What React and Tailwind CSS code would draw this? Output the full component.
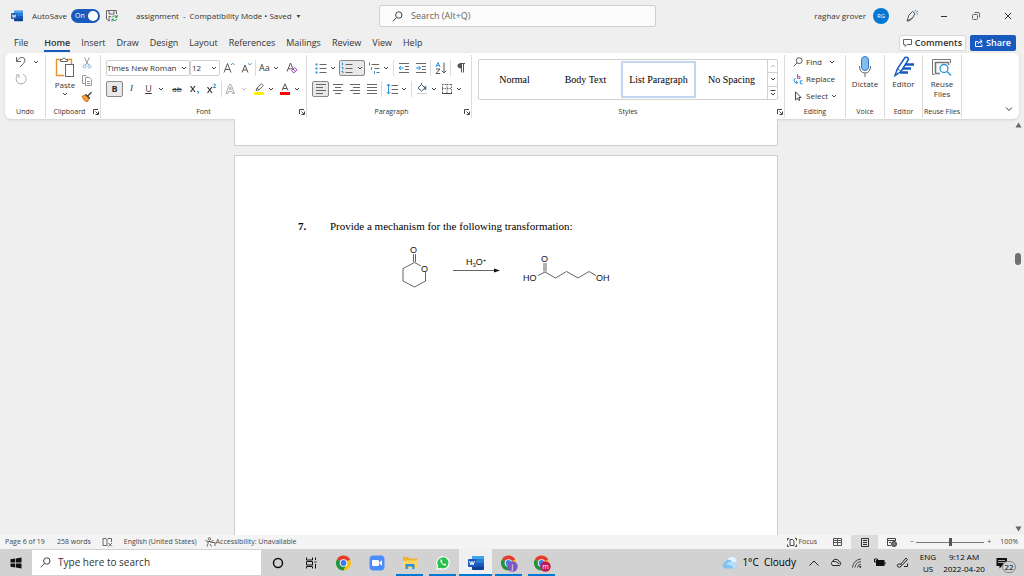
import React from "react";

const TABS = ["File", "Home", "Insert", "Draw", "Design", "Layout", "References", "Mailings", "Review", "View", "Help"];

const STYLES = ["Normal", "Body Text", "List Paragraph", "No Spacing"];

function Svg({ w = 16, h = 16, children, className = "" }) {
  return (
    <svg width={w} height={h} viewBox={`0 0 ${w} ${h}`} fill="none" stroke="#666" className={"shrink-0 " + className} aria-hidden="true">
      {children}
    </svg>
  );
}

function Chevron({ color = "#444" }) {
  return (
    <Svg w={6} h={6}>
      <path d="M1 2 L3 4 L5 2" stroke={color} />
    </Svg>
  );
}

function Tool({ label, active, wide, narrow, children }) {
  return (
    <button
      aria-label={label}
      className={
        "flex h-4 shrink-0 items-center justify-center rounded-xs " +
        (wide ? "w-[26px] gap-1 " : narrow ? "w-2 " : "w-[17px] ") +
        (active ? "border border-[#888] bg-[#e8e8e8]" : "")
      }>
      {children}
    </button>
  );
}

function Drop({ label, color }) {
  return (
    <Tool label={label} narrow>
      <Chevron color={color} />
    </Tool>
  );
}

function Divider() {
  return <span className="mx-px h-4 w-px shrink-0 bg-[#dcdcdc]" />;
}

function Launcher({ label }) {
  return (
    <button aria-label={label} className="absolute right-px bottom-0 flex h-3 items-center">
      <Svg w={6} h={6}>
        <path d="M0.5 5 V0.5 H5 M2.5 2.5 L5 5 M5.5 2.5 V5.5 H2.5" stroke="#444" />
      </Svg>
    </button>
  );
}

function Group({ label, launcher, className = "", children }) {
  return (
    <section className={"relative flex flex-col border-r border-[#dcdcdc] " + className}>
      <div className="flex-1">{children}</div>
      <h2 className="h-3 text-center text-[7px] leading-3 whitespace-nowrap">{label}</h2>
      {launcher && <Launcher label={label + " settings"} />}
    </section>
  );
}

function WordLogo({ size = 12 }) {
  return (
    <svg width={size} height={size} viewBox="0 0 16 16" className="shrink-0" aria-hidden="true">
      <rect x="4" y="1" width="12" height="14" rx="1" fill="#103f91" />
      <path d="M4 2a1 1 0 0 1 1-1h10a1 1 0 0 1 1 1v2.5H4z" fill="#41a5ee" />
      <path d="M4 4.5h12V8H4z" fill="#2b7cd3" />
      <path d="M4 8h12v3.5H4z" fill="#185abd" />
      <rect x="0" y="4" width="8" height="8" rx="1" fill="#185abd" />
      <path d="M1.6 6 L2.8 10 L4 6.5 L5.2 10 L6.4 6" fill="none" stroke="#fff" strokeWidth="1" />
    </svg>
  );
}

function ChromeLogo({ badge, color }) {
  return (
    <svg width="18" height="18" viewBox="0 0 18 18" aria-hidden="true">
      <circle cx="8.5" cy="9" r="7.5" fill="#fbc116" />
      <path d="M8.5 9 L2 5.2 A7.5 7.5 0 0 1 15 5.2 Z" fill="#e33b2e" />
      <path d="M8.5 9 L2 5.2 A7.5 7.5 0 0 0 8.5 16.5 L11 11 Z" fill="#229342" />
      <path d="M8.5 5.6h6.6" stroke="#e33b2e" strokeWidth="1" />
      <circle cx="8.5" cy="9" r="3.8" fill="#fff" />
      <circle cx="8.5" cy="9" r="2.9" fill="#3b7ded" />
      {badge && <circle cx="12.5" cy="12.5" r="5.2" fill={color} />}
      {badge && (
        <text x="12.5" y="14.5" textAnchor="middle" fontSize="7" fill="#fff">
          {badge}
        </text>
      )}
    </svg>
  );
}

function SearchIcon({ size = 11 }) {
  return (
    <svg width={size} height={size} viewBox="0 0 11 11" fill="none" stroke="#444" className="shrink-0" aria-hidden="true">
      <circle cx="6.8" cy="4" r="3.2" />
      <path d="M4.5 6.5 L0.8 10.3" />
    </svg>
  );
}

function PenIcon() {
  return (
    <Svg w={12} h={12}>
      <path d="M1 11 L3 5 L6.5 1.5 L9 3.5 L6.5 8 Z M1 11 L4 10.5 L6.5 8" stroke="#555" />
      <path d="M9 1.5 L9.5 0 M10.3 2.3 L12 1 M10.5 4 H12" stroke="#2b93d8" />
    </Svg>
  );
}

function TitleBar() {
  return (
    <header className="flex h-8 items-center pl-[11px] text-[8px]">
      <div className="flex flex-1 items-center whitespace-nowrap">
        <WordLogo />
        <label className="ml-[9px] flex items-center gap-1">
          AutoSave
          <input type="checkbox" defaultChecked className="sr-only" />
          <span className="flex h-[14px] w-[29px] items-center justify-between rounded-full bg-[#185abd] pr-[2px] pl-1 text-[7px] text-white">
            On
            <span className="h-[10px] w-[10px] rounded-full bg-white" />
          </span>
        </label>
        <button aria-label="Save" className="ml-[6px]">
          <Svg w={12} h={12}>
            <path d="M0.5 0.5 H10.5 V4 M0.5 0.5 V9 L2 10.5 H4 M3 0.5 V4 H8 V0.5 M3 10 V6.5 H5" stroke="#666" />
            <path d="M6 7.5 A3 3 0 0 1 11 7 M11.2 4.8 V7.3 H9 M11 9 A3 3 0 0 1 6.2 9.5 M6 11.5 V9.2 H8" stroke="#2d9a50" />
          </Svg>
        </button>
        <h1 className="ml-[18px] flex items-center gap-1">
          <span>assignment</span>
          <span>-</span>
          <span>Compatibility Mode • Saved</span>
          <Svg w={5} h={5}>
            <path d="M0.5 1 H4.5 L2.5 4 Z" fill="#444" stroke="none" />
          </Svg>
        </h1>
      </div>
      <label className="flex h-[22px] w-[277px] items-center gap-2 rounded-xs border border-[#d0d0d0] bg-[#fbfbfb] pl-3">
        <SearchIcon />
        <input type="text" aria-label="Search" placeholder="Search (Alt+Q)" className="w-full bg-transparent text-[9px] outline-none placeholder:text-[#666]" />
      </label>
      <div className="flex flex-1 items-center justify-end">
        <span>raghav grover</span>
        <span className="ml-[7px] flex h-4 w-4 items-center justify-center rounded-full bg-[#0078d4] text-[6px] text-white">RG</span>
        <button aria-label="Draw" className="ml-[7px] flex w-8 justify-center">
          <PenIcon />
        </button>
        <button aria-label="Minimize" className="flex w-8 justify-center">
          <Svg w={8} h={8}>
            <path d="M1 4.5 H7" stroke="#333" />
          </Svg>
        </button>
        <button aria-label="Restore" className="flex w-8 justify-center">
          <Svg w={8} h={8}>
            <rect x="0.5" y="2.5" width="5" height="5" rx="1" />
            <path d="M2.5 0.5 H6 Q7.5 0.5 7.5 2 V5.5" />
          </Svg>
        </button>
        <button aria-label="Close" className="flex w-8 justify-center">
          <Svg w={8} h={8}>
            <path d="M1 1 L7 7 M7 1 L1 7" stroke="#333" />
          </Svg>
        </button>
      </div>
    </header>
  );
}

function TabRow() {
  return (
    <div className="flex h-[21px] items-center pr-2 pl-[14px]">
      <nav className="flex flex-1 items-center gap-[11px] pt-px text-[9px]">
        {TABS.map((t) => (
          <button
            key={t}
            className={
              "h-[18px] border-b-2 pt-px " +
              (t === "Home" ? "border-[#185abd] font-semibold" : "border-transparent") +
              (t === "File" ? " mr-[5px]" : "")
            }>
            {t}
          </button>
        ))}
      </nav>
      <div className="flex gap-1 text-[9px] font-semibold">
        <button className="flex h-4 items-center gap-[3px] rounded-xs border border-[#d8d8d8] bg-white px-[3px]">
          <Svg w={9} h={8}>
            <path d="M0.5 0.5 H8.5 V5.5 H4 L2 7.5 V5.5 H0.5 Z" />
          </Svg>
          Comments
        </button>
        <button className="flex h-4 items-center gap-[3px] rounded-xs bg-[#185abd] px-[5px] text-white">
          <Svg w={8} h={8}>
            <path d="M3 2.5 H0.5 V7.5 H7 V5.5 M2.5 5 Q3 2.5 7 2.5 M5 0.5 L7.2 2.5 L5 4.5" stroke="#fff" />
          </Svg>
          Share
        </button>
      </div>
    </div>
  );
}

function UndoGroup() {
  return (
    <Group label="Undo" className="w-[41px]">
      <div className="flex items-center gap-[6px] pt-px pl-[10px]">
        <button aria-label="Undo">
          <Svg w={12} h={12}>
            <path d="M1.5 1 V5.5 H6 M1.5 5.5 L4 2.5 Q7 0 9.5 2.5 Q11 5 8.5 7.5 L5 11" />
          </Svg>
        </button>
        <Chevron />
      </div>
      <button aria-label="Redo" className="block pt-[5px] pl-[10px]">
        <Svg w={12} h={12}>
          <path d="M8 1.3 A5 5 0 1 1 2.5 2.5 M1 2 H4 V5" stroke="#aaa" />
        </Svg>
      </button>
    </Group>
  );
}

function ClipboardGroup() {
  return (
    <Group label="Clipboard" launcher className="w-[55px] pr-[7px]">
      <div className="flex justify-between pl-2">
        <button className="flex flex-col items-center text-[8px] leading-3">
          <Svg w={22} h={24}>
            <path d="M7 4.5 H2.5 V20.5 H10 M13 4.5 H17.5 V9" stroke="#e8912d" strokeWidth="1.4" />
            <path d="M6.5 6.5 V4.5 H8.5 Q10 1 11.5 4.5 H13.5 V6.5 Z" stroke="#666" />
            <rect x="11.5" y="9.5" width="8" height="12" fill="#fff" />
          </Svg>
          Paste
          <Chevron />
        </button>
        <div className="flex flex-col items-center gap-[5px] pt-[2px]">
          <button aria-label="Cut">
            <Svg w={10} h={12}>
              <path d="M2.5 0.5 L6.5 8 M7.5 0.5 L3.5 8" stroke="#999" />
              <circle cx="2.5" cy="9.5" r="1.5" stroke="#7fb6dd" />
              <circle cx="7.5" cy="9.5" r="1.5" stroke="#7fb6dd" />
            </Svg>
          </button>
          <button aria-label="Copy">
            <Svg w={12} h={12}>
              <path d="M4 9.5 H1.5 V1.5 H5 L6 2.5" stroke="#999" />
              <path d="M4.5 3.5 H8.5 L10.5 5.5 V11.5 H4.5 Z M6 7.5 H9 M6 9.5 H9" stroke="#999" />
            </Svg>
          </button>
          <button aria-label="Format painter">
            <Svg w={12} h={12}>
              <path d="M1 5.5 L5 3.5 L8.5 7 L6 11 Q2.5 9.5 1 5.5 Z" fill="#f2a03d" stroke="#c97415" />
              <path d="M4.5 3.5 L8.8 7.5 M6.7 5 L10.5 1.3" stroke="#444" strokeWidth="1.4" />
            </Svg>
          </button>
        </div>
      </div>
    </Group>
  );
}

function FontGroup() {
  return (
    <Group label="Font" launcher className="w-[206px] px-[5px]">
      <div className="flex flex-col gap-[5px] pt-[5px]">
        <div className="flex h-4 items-center text-[8px]">
          <label className="flex h-4 w-[84px] items-center rounded-xs border border-[#d0d0d0] pr-[2px]">
            <select aria-label="Font" className="w-full appearance-none bg-transparent outline-none">
              <option>Times New Roman</option>
            </select>
            <Chevron />
          </label>
          <label className="flex h-4 w-[30px] items-center rounded-xs border border-[#d0d0d0] pr-[2px] pl-px">
            <select aria-label="Font size" className="w-full appearance-none bg-transparent outline-none">
              <option>12</option>
            </select>
            <Chevron />
          </label>
          <Tool label="Grow font">
            <Svg w={12} h={12}>
              <path d="M1 10.5 L4.5 1.5 L8 10.5 M2.2 7.5 H6.8" stroke="#555" />
              <path d="M8 3 L9.7 1.2 L11.4 3" stroke="#2b93d8" />
            </Svg>
          </Tool>
          <Tool label="Shrink font">
            <Svg w={12} h={12}>
              <path d="M2 10.5 L5 3 L8 10.5 M3.2 8 H6.8" stroke="#555" />
              <path d="M8 1.2 L9.7 3 L11.4 1.2" stroke="#2b93d8" />
            </Svg>
          </Tool>
          <Divider />
          <button className="ml-[2px] flex items-center gap-[3px] text-[9px]">
            Aa <Chevron />
          </button>
          <span className="flex-1" />
          <Tool label="Clear formatting">
            <Svg w={13} h={12}>
              <path d="M1 9.5 L4.5 1 L7.5 8 M2.2 6.8 H6" stroke="#555" />
              <path d="M5.5 8.7 L8.7 5.5 L11 7.8 L7.8 11 Z M7 7 L9.5 9.5" stroke="#a33fb5" />
            </Svg>
          </Tool>
        </div>
        <div className="flex h-4 items-center text-[9px]">
          <Tool label="Bold" active>
            <b className="text-[#333]">B</b>
          </Tool>
          <Tool label="Italic">
            <i className="font-['Liberation_Serif',serif]">I</i>
          </Tool>
          <Tool label="Underline">
            <span className="underline">U</span>
          </Tool>
          <Drop label="Underline style" />
          <span className="w-1" />
          <Tool label="Strikethrough">
            <span className="text-[8px] line-through">ab</span>
          </Tool>
          <Tool label="Subscript">
            <Svg w={11} h={12}>
              <path d="M1.5 3 L6 9 M6 3 L1.5 9" stroke="#333" strokeWidth="1.2" />
              <path d="M8 8.5 H9.5 V10 L8.5 11" stroke="#2b93d8" />
            </Svg>
          </Tool>
          <Tool label="Superscript">
            <Svg w={11} h={12}>
              <path d="M1.5 4 L6 10 M6 4 L1.5 10" stroke="#333" strokeWidth="1.2" />
              <path d="M7.5 1.5 Q9.5 0 9.5 2 L7.5 4.5 H10" stroke="#2b93d8" />
            </Svg>
          </Tool>
          <Divider />
          <Tool label="Text effects">
            <Svg w={12} h={12}>
              <path d="M1 10.5 L4.5 1.5 H6 L9.5 10.5 H7.5 L6.8 8.5 H3.8 L3 10.5 Z M4.5 6.5 H6.2 L5.3 4 Z" stroke="#aaa" />
            </Svg>
          </Tool>
          <Drop label="Text effects menu" color="#bbb" />
          <span className="w-[3px]" />
          <Tool label="Highlight">
            <Svg w={12} h={12}>
              <path d="M3 7.5 L4 5 L8.5 0.8 L10.3 2.6 L6 6.8 L3 7.5 Z M4 5 L6 6.8" stroke="#666" />
              <rect x="1" y="9" width="10" height="3" fill="#fff200" stroke="none" />
            </Svg>
          </Tool>
          <Drop label="Highlight colour" />
          <span className="w-px" />
          <Tool label="Font colour">
            <Svg w={12} h={12}>
              <path d="M3 7.5 L6 0.8 L9 7.5 M4 5.5 H8" stroke="#555" />
              <rect x="1" y="9" width="10" height="3" fill="#f00" stroke="none" />
            </Svg>
          </Tool>
          <Drop label="Font colour menu" />
        </div>
      </div>
    </Group>
  );
}

function AlignIcon({ lines }) {
  return (
    <Svg w={12} h={12}>
      {lines.map(([a, b], i) => (
        <path key={i} d={`M${a} ${1.5 + i * 3} H${b}`} />
      ))}
    </Svg>
  );
}

function ListIcon({ numbered }) {
  return (
    <Svg w={12} h={12}>
      <path d="M4.5 2.5 H11.5 M4.5 6.5 H11.5 M4.5 10.5 H11.5" />
      {numbered ? (
        <path d="M1.5 0.5 V3.5 M0.5 5.5 H2 V7.5 M0.5 9.5 H2 V11.5" stroke="#2b93d8" />
      ) : (
        <path d="M0.5 2.5 H2.5 M0.5 6.5 H2.5 M0.5 10.5 H2.5" stroke="#2b93d8" strokeWidth="2" />
      )}
    </Svg>
  );
}

function IndentIcon({ out }) {
  return (
    <Svg w={12} h={12}>
      <path d="M1 1.5 H11 M7 4.5 H11 M7 7.5 H11 M1 10.5 H11" />
      <path d={out ? "M5.5 6 H1 M3 4 L1 6 L3 8" : "M1 6 H5.5 M3.5 4 L5.5 6 L3.5 8"} stroke="#2b93d8" />
    </Svg>
  );
}

function ParagraphGroup() {
  return (
    <Group label="Paragraph" launcher className="w-[165px] pl-[5px]">
      <div className="flex flex-col gap-[5px] pt-[5px]">
        <div className="flex h-4 items-center">
          <Tool label="Bullets">
            <ListIcon />
          </Tool>
          <Drop label="Bullet library" />
          <span className="w-[2px]" />
          <Tool label="Numbering" active wide>
            <ListIcon numbered />
            <Chevron />
          </Tool>
          <Tool label="Multilevel list">
            <Svg w={12} h={12}>
              <path d="M3.5 2.5 H11 M6.5 6.5 H11.5 M8.5 10.5 H11.5" />
              <path d="M1.5 0.5 V3.5 M3.5 5 V8 M6.5 9 V12" stroke="#2b93d8" />
            </Svg>
          </Tool>
          <Drop label="Multilevel list menu" />
          <span className="w-[2px]" />
          <Divider />
          <Tool label="Decrease indent">
            <IndentIcon out />
          </Tool>
          <Tool label="Increase indent">
            <IndentIcon />
          </Tool>
          <Divider />
          <Tool label="Sort">
            <Svg w={12} h={12}>
              <path d="M0.8 5 L3 0.5 L5.2 5 M1.5 3.5 H4.5" stroke="#2b93d8" />
              <path d="M1 7 H5 L1 11.5 H5.2 M9 0.5 V11 M6.8 8.8 L9 11 L11.2 8.8" stroke="#555" />
            </Svg>
          </Tool>
          <Divider />
          <Tool label="Show marks">
            <Svg w={10} h={12}>
              <path d="M5.5 10.5 V1.5 M7.5 10.5 V1.5 M4 1.5 H9" stroke="#555" />
              <path d="M5.5 1 V6.5 Q1.5 6.5 1.5 3.8 Q1.5 1 5.5 1Z" fill="#555" stroke="none" />
            </Svg>
          </Tool>
        </div>
        <div className="flex h-4 items-center">
          <Tool label="Align left" active>
            <AlignIcon lines={[[1, 11], [1, 8], [1, 11], [1, 8]]} />
          </Tool>
          <Tool label="Center">
            <AlignIcon lines={[[1, 11], [3, 9], [1, 11], [3, 9]]} />
          </Tool>
          <Tool label="Align right">
            <AlignIcon lines={[[1, 11], [4, 11], [1, 11], [4, 11]]} />
          </Tool>
          <Tool label="Justify">
            <AlignIcon lines={[[1, 11], [1, 11], [1, 11], [1, 11]]} />
          </Tool>
          <Divider />
          <Tool label="Line spacing">
            <Svg w={12} h={12}>
              <path d="M5.5 2.5 H12 M5.5 6.5 H12 M5.5 10.5 H12" />
              <path d="M2.5 1 V11 M0.8 3 L2.5 1 L4.2 3 M0.8 9 L2.5 11 L4.2 9" stroke="#2b93d8" />
            </Svg>
          </Tool>
          <Drop label="Line spacing menu" />
          <span className="w-[2px]" />
          <Divider />
          <Tool label="Shading">
            <Svg w={12} h={12}>
              <path d="M2 5 L5.5 1.5 L9 5 L5.5 8 Z M5.5 1.5 V0" stroke="#555" />
              <path d="M9.5 3 V7" stroke="#2b7cd3" strokeWidth="1.6" />
              <path d="M1 10.5 H11" stroke="#ccc" />
            </Svg>
          </Tool>
          <Drop label="Shading colour" />
          <Tool label="Borders">
            <Svg w={12} h={12}>
              <path d="M1.5 1 V10 M10.5 1 V10 M6 1 V10 M1 1.5 H11 M1 5.5 H11" stroke="#666" strokeDasharray="1.5 1" />
              <path d="M1 10.5 H11" stroke="#444" />
            </Svg>
          </Tool>
          <Drop label="Borders menu" />
        </div>
      </div>
    </Group>
  );
}

function StylesGroup() {
  return (
    <Group label="Styles" launcher className="flex-1 px-[6px]">
      <div className="mt-1 flex h-[41px] rounded-xs border border-[#d0d0d0]">
        {STYLES.map((s) => (
          <button
            key={s}
            className={
              "my-px flex-1 font-['Liberation_Serif',serif] text-[10px] whitespace-nowrap text-black " +
              (s === "List Paragraph" ? "border-2 border-[#c3d5f1]" : "")
            }>
            {s}
          </button>
        ))}
        <div className="flex w-[10px] flex-col divide-y divide-[#d0d0d0] border-l border-[#d0d0d0]">
          <button aria-label="Scroll up" className="flex flex-1 items-center justify-center">
            <Svg w={6} h={6}>
              <path d="M1 4 L3 2 L5 4" stroke="#bbb" />
            </Svg>
          </button>
          <button aria-label="Scroll down" className="flex flex-1 items-center justify-center">
            <Chevron />
          </button>
          <button aria-label="More styles" className="flex flex-1 items-center justify-center">
            <Svg w={6} h={6}>
              <path d="M0.5 0.5 H5.5 M1 3 L3 5 L5 3" stroke="#444" />
            </Svg>
          </button>
        </div>
      </div>
    </Group>
  );
}

function EditingGroup() {
  return (
    <Group label="Editing" className="w-[61px]">
      <div className="flex flex-col gap-[3px] pl-2 text-[8px] leading-[14px]">
        <button className="flex items-center gap-[3px]">
          <SearchIcon size={10} />
          <span className="mr-1">Find</span>
          <Chevron />
        </button>
        <button className="flex items-center gap-[3px]">
          <Svg w={10} h={11}>
            <path d="M4.5 0 V4.5 H7 V2.5 H4.5" stroke="#b04fc0" />
            <path d="M2.5 4 Q-0.5 6 2 8.5 H4.5 M3 6.8 L4.8 8.5 L3 10.3 M9.5 6.8 H7.3 V9.8 H9.5" stroke="#2b93d8" />
          </Svg>
          Replace
        </button>
        <button className="flex items-center gap-[3px]">
          <Svg w={10} h={10}>
            <path d="M2.5 0.8 V9 L4.5 7.2 L5.8 9.6 L6.8 9 L5.8 6.5 H8 Z" stroke="#444" />
          </Svg>
          Select
          <Chevron />
        </button>
      </div>
    </Group>
  );
}

function BigButton({ icon, children }) {
  return (
    <button className="flex w-full flex-col items-center pt-px text-[8px] leading-[10px]">
      {icon}
      <span className="pt-[2px]">{children}</span>
    </button>
  );
}

function Ribbon() {
  return (
    <div className="mx-[5px] flex h-[66px] rounded-md bg-white pt-[2px] pb-px shadow">
      <UndoGroup />
      <ClipboardGroup />
      <FontGroup />
      <ParagraphGroup />
      <StylesGroup />
      <EditingGroup />
      <Group label="Voice" className="w-[39px]">
        <BigButton
          icon={
            <Svg w={20} h={21}>
              <rect x="6.5" y="0.5" width="7" height="14" rx="3.5" fill="#83bbec" stroke="#2b7cd3" />
              <path d="M4.5 10 Q4.5 17 10 17 Q15.5 17 15.5 10 M10 17 V21" />
            </Svg>
          }>
          Dictate
        </BigButton>
      </Group>
      <Group label="Editor" className="w-[38px]">
        <BigButton
          icon={
            <Svg w={22} h={21}>
              <path d="M11 8.5 H21 M10 12.5 H18 M7 16.5 H15" stroke="#185abd" strokeWidth="2.4" />
              <path d="M2 19.5 L4.5 12.5 L12 1.5 Q15 0.5 15.5 3.5 L8 15.5 Z" fill="#fff" stroke="#185abd" strokeWidth="1.5" />
              <path d="M4.5 12.5 L8 15.5" stroke="#185abd" />
            </Svg>
          }>
          Editor
        </BigButton>
      </Group>
      <Group label="Reuse Files" className="w-[39px]">
        <BigButton
          icon={
            <Svg w={22} h={21}>
              <path d="M3.5 18.5 H1.5 V3.5 H19.5 V7" stroke="#777" />
              <path d="M9 17.5 H4.5 V6.5 H17.5 V9" stroke="#777" strokeWidth="1.6" />
              <circle cx="13" cy="12.5" r="4" fill="#fff" stroke="#2b93d8" strokeWidth="1.3" />
              <path d="M16 15.5 L20 19.5" stroke="#2b93d8" strokeWidth="1.3" />
            </Svg>
          }>
          Reuse Files
        </BigButton>
      </Group>
      <div className="flex w-[57px] items-end justify-end p-[6px]">
        <button aria-label="Collapse ribbon">
          <Svg w={8} h={6}>
            <path d="M1 1.5 L4 4.5 L7 1.5" stroke="#333" />
          </Svg>
        </button>
      </div>
    </div>
  );
}

function Reaction() {
  return (
    <svg width="216" height="52" viewBox="0 0 216 52" fill="none" stroke="#222" strokeWidth="0.7" className="font-['Liberation_Sans',sans-serif]" role="img" aria-label="Lactone hydrolysis">
      {/* lactone ring */}
      <path d="M17.5 20.5 L6 26.5 V39 L17.5 45 L28.5 39 V30 M17.5 20.5 L24 24" />
      <path d="M16.5 12 V20 M18.5 12 V20" />
      {/* reaction arrow */}
      <path d="M56 28.5 H99" />
      <path d="M97 26.5 L103 28.5 L97 30.5 Z" fill="#111" stroke="none" />
      {/* hydroxy acid */}
      <path d="M141 33.5 L148 30 L158.5 36 L169.5 29.5 L181 36 L192 29.5 L199 33.5" />
      <path d="M147 21 V29.5 M149 21 V29.5" />
      <g fill="#111" stroke="none" fontSize="9">
        <text x="13" y="11">O</text>
        <text x="24" y="30">O</text>
        <text x="69" y="23">
          H<tspan fontSize="6" dy="2">3</tspan>
          <tspan dy="-2">O</tspan>
          <tspan fontSize="6" dy="-3">+</tspan>
        </text>
        <text x="144" y="20">O</text>
        <text x="126" y="39">HO</text>
        <text x="199" y="39">OH</text>
      </g>
    </svg>
  );
}

function DocumentArea() {
  return (
    <main className="flex min-h-0 flex-1">
      <div className="flex flex-1 flex-col items-center gap-[9px] overflow-hidden">
        <div className="h-[27px] w-[544px] shrink-0 border border-t-0 border-[#cfcfcf] bg-white" />
        <article className="w-[544px] flex-1 border border-b-0 border-[#cfcfcf] bg-white px-[63px] pt-[63px] font-['Liberation_Serif',serif] text-[11px] text-black">
          <p className="flex leading-[14px]">
            <b className="w-8">7.</b>
            Provide a mechanism for the following transformation:
          </p>
          <div className="mt-[9px] pl-[99px]">
            <Reaction />
          </div>
        </article>
      </div>
      <div className="flex w-3 flex-col items-center justify-between py-[3px]">
        <Svg w={7} h={6}>
          <path d="M0.5 5.5 H6.5 L3.5 0.5 Z" fill="#666" stroke="none" />
        </Svg>
        <div className="flex flex-1 flex-col pt-[125px]">
          <span className="h-3 w-[6px] rounded-full bg-[#707070]" />
        </div>
        <Svg w={7} h={6}>
          <path d="M0.5 0.5 H6.5 L3.5 5.5 Z" fill="#666" stroke="none" />
        </Svg>
      </div>
    </main>
  );
}

function StatusBar() {
  return (
    <footer className="flex h-[14px] items-center bg-[#f4f4f4] pr-[6px] pl-[5px] text-[7px] whitespace-nowrap text-[#444]">
      <span>Page 6 of 19</span>
      <span className="ml-3">258 words</span>
      <Svg w={11} h={9} className="ml-[11px]">
        <path d="M4.5 7.5 H1 V0.5 H4 L5 1.5 L6 0.5 H9.5 V4 M5 1.5 V8 M6.5 5 L10 8.5 M10 5 L6.5 8.5" />
      </Svg>
      <span className="ml-[11px]">English (United States)</span>
      <Svg w={11} h={10} className="ml-2">
        <circle cx="4.5" cy="1.8" r="1.2" />
        <path d="M0.5 3.5 L3 4.5 V6.5 L2 9.5 M8.5 3.5 L6 4.5 V6 M3 4.5 H6 M5 7 L6.5 9.5 M7 5.5 H10 V9" />
      </Svg>
      <span>Accessibility: Unavailable</span>
      <span className="flex-1" />
      <button className="flex items-center gap-px">
        <Svg w={10} h={9}>
          <path d="M2 0.5 H0.5 V2.5 M8 0.5 H9.5 V2.5 M0.5 6.5 V8.5 H2 M9.5 6.5 V8.5 H8 M3 1.5 H5.5 L7 3 V7.5 H3 Z" stroke="#444" />
        </Svg>
        Focus
      </button>
      <button aria-label="Read mode" className="ml-[7px] flex w-[27px] justify-center">
        <Svg w={9} h={8}>
          <path d="M0.5 0.5 H8.5 V7.5 H0.5 Z M4.5 0.5 V7.5 M1 2.5 H4 M1 4.5 H4 M5 2.5 H8 M5 4.5 H8" stroke="#555" />
        </Svg>
      </button>
      <button aria-label="Print layout" className="flex h-[14px] w-[27px] items-center justify-center bg-[#dcdcdc]">
        <Svg w={8} h={9}>
          <path d="M0.5 0.5 H7.5 V8.5 H0.5 Z M2 2.5 H6 M2 4.5 H6 M2 6.5 H6" stroke="#333" />
        </Svg>
      </button>
      <button aria-label="Web layout" className="flex w-[27px] justify-center">
        <Svg w={10} h={9}>
          <path d="M4 7.5 H0.5 V0.5 H8.5 V3 M0.5 2.5 H8 M2 4.5 H4" stroke="#444" />
          <circle cx="7" cy="6" r="2.5" fill="#777" stroke="#444" />
        </Svg>
      </button>
      <button aria-label="Zoom out" className="ml-[3px] w-2 text-center">−</button>
      <input
        type="range"
        aria-label="Zoom"
        defaultValue="50"
        className="h-2 w-[68px] appearance-none bg-transparent [&::-webkit-slider-runnable-track]:h-px [&::-webkit-slider-runnable-track]:bg-[#777] [&::-webkit-slider-thumb]:-mt-1 [&::-webkit-slider-thumb]:h-2 [&::-webkit-slider-thumb]:w-[3px] [&::-webkit-slider-thumb]:appearance-none [&::-webkit-slider-thumb]:bg-[#555]"
      />
      <button aria-label="Zoom in" className="ml-px w-2 text-center">+</button>
      <span className="ml-[7px]">100%</span>
    </footer>
  );
}

function TaskButton({ label, open, active, children }) {
  return (
    <button
      aria-label={label}
      className={"flex w-[33px] items-stretch justify-center " + (active ? "bg-[#f0f0f0]" : "px-[3px]")}>
      <span className={"flex flex-1 items-center justify-center border-b-2 pt-[2px] " + (open ? "border-[#0078d4]" : "border-transparent")}>
        {children}
      </span>
    </button>
  );
}

function Taskbar() {
  return (
    <div className="flex h-[27px] items-stretch bg-[#d2d2d2] text-black">
      <button aria-label="Start" className="flex w-8 items-center justify-center">
        <Svg w={12} h={12}>
          <path d="M0.5 2.2 L5.3 1.5 V5.6 H0.5 Z M6 1.4 L11.5 0.5 V5.6 H6 Z M0.5 6.4 H5.3 V10.5 L0.5 9.8 Z M6 6.4 H11.5 V11.5 L6 10.6 Z" fill="#111" stroke="none" />
        </Svg>
      </button>
      <label className="my-px flex w-[229px] items-center gap-[7px] bg-white pl-2">
        <SearchIcon />
        <input type="text" aria-label="Search Windows" placeholder="Type here to search" className="w-full bg-transparent text-[10px] outline-none placeholder:text-[#333]" />
      </label>
      <TaskButton label="Cortana">
        <Svg w={12} h={12}>
          <circle cx="6" cy="6" r="4.5" stroke="#111" strokeWidth="1.5" />
        </Svg>
      </TaskButton>
      <TaskButton label="Task view">
        <Svg w={12} h={12}>
          <path d="M1.5 0.5 V3 H7.5 V0.5 M1.5 4.5 H7.5 V8 H1.5 Z M1.5 11.5 V9.5 H7.5 V11.5 M10.5 0.5 V3 M10.5 7 V11.5 M9.5 5 H11.5" stroke="#111" />
        </Svg>
      </TaskButton>
      <TaskButton label="Chrome">
        <ChromeLogo />
      </TaskButton>
      <TaskButton label="Zoom">
        <Svg w={16} h={16}>
          <rect x="0.5" y="0.5" width="15" height="15" rx="4" fill="#4a8cff" stroke="none" />
          <rect x="3" y="5" width="7" height="6" rx="1" fill="#fff" stroke="none" />
          <path d="M10.5 7.2 L13 5.3 V10.7 L10.5 8.8 Z" fill="#fff" stroke="none" />
        </Svg>
      </TaskButton>
      <TaskButton label="File Explorer" open>
        <Svg w={16} h={14}>
          <path d="M1 1 H6 L7.5 2.5 H15 V12 H1 Z" fill="#f0b429" stroke="none" />
          <path d="M1 4.5 H15 V12 H1 Z" fill="#ffd766" stroke="none" />
          <path d="M3.5 13 V8 H12.5 V13 H10.3 V10.5 H5.7 V13 Z" fill="#2b8fd8" stroke="none" />
        </Svg>
      </TaskButton>
      <TaskButton label="WhatsApp" open>
        <Svg w={16} h={16}>
          <path d="M1 15 L2.2 11.5 A6.8 6.8 0 1 1 4.8 14 Z" fill="#fff" stroke="none" />
          <path d="M2.5 13.5 L3.3 11 A5.6 5.6 0 1 1 5.3 12.8 Z" fill="#2bc04e" stroke="none" />
          <path d="M5.5 4.5 Q4.8 6.5 7 9 Q9.2 11.2 11.2 10.3 L11 9 L9.5 8.5 L8.8 9.2 Q7.5 8.6 6.8 7.2 L7.4 6.5 L6.8 4.6 Z" fill="#fff" stroke="none" />
        </Svg>
      </TaskButton>
      <TaskButton label="Word" open active>
        <WordLogo size={16} />
      </TaskButton>
      <TaskButton label="Chrome profile j" open>
        <ChromeLogo badge="j" color="#7e57c2" />
      </TaskButton>
      <TaskButton label="Chrome profile m" open>
        <ChromeLogo badge="m" color="#c2185b" />
      </TaskButton>
      <span className="flex-1" />
      <div className="flex items-center whitespace-nowrap">
        <Svg w={16} h={14} className="mr-1">
          <circle cx="10" cy="5.5" r="4.5" fill="#e4f3fc" stroke="none" />
          <path d="M3.5 12.5 A3.2 3.2 0 0 1 3 6.2 A4 4 0 0 1 10.3 6.2 A3.2 3.2 0 0 1 12 12.5 Z" fill="#7ec3f0" stroke="none" />
          <path d="M4.5 9 A4 4 0 0 1 10 6 A4 4 0 0 1 14 12 L12 12.5 Q8 8 4.5 9Z" fill="#b5dff8" stroke="none" />
        </Svg>
        <span className="text-[10px]">1°C&nbsp; Cloudy</span>
        <div className="ml-3 flex items-center">
          <button aria-label="Hidden icons" className="flex w-[22px] justify-start">
            <Svg w={12} h={8}>
              <path d="M1.5 6.5 L6 2 L10.5 6.5" stroke="#222" />
            </Svg>
          </button>
          <button aria-label="OneDrive" className="flex w-[22px] justify-start">
            <Svg w={12} h={9}>
              <path d="M3 7.5 A2.2 2.2 0 0 1 2.5 3.5 A3.5 3.5 0 0 1 9 3.5 A2.1 2.1 0 0 1 9.5 7.5 Z" fill="#ddd" stroke="#222" />
              <path d="M2.5 3.5 Q5.5 2.5 9.5 6" stroke="#222" />
            </Svg>
          </button>
          <button aria-label="Network" className="flex w-[22px] justify-start">
            <Svg w={10} h={10}>
              <path d="M0.5 9.5 A9 9 0 0 1 9 1 M3 9.5 A6.5 6.5 0 0 1 9 3.5 M5.5 9.5 A4 4 0 0 1 9 6" stroke="#444" />
              <circle cx="8.2" cy="8.7" r="1" fill="#222" stroke="none" />
            </Svg>
          </button>
          <button aria-label="Battery" className="flex w-[22px] justify-start">
            <Svg w={12} h={9}>
              <rect x="2" y="2" width="8.5" height="6" fill="#111" stroke="none" />
              <path d="M11 4 V6.5 M0.5 1 H3.5 V4 H0.5 Z" stroke="#111" />
            </Svg>
          </button>
          <button aria-label="Pen" className="flex w-5 justify-start">
            <Svg w={13} h={12}>
              <path d="M4.5 7.5 L10 1 L11.5 2.5 L6 8.5 Z M4.5 7 Q0.5 6.5 1.5 9.5 Q3 11.5 5.5 9 M8 9.5 H11.5 V6.5" stroke="#222" />
            </Svg>
          </button>
        </div>
        <div className="w-6 text-center text-[8px] leading-3">
          <div>ENG</div>
          <div>US</div>
        </div>
        <div className="ml-[2px] w-11 text-center text-[8px] leading-3">
          <div>9:12 AM</div>
          <div>2022-04-20</div>
        </div>
        <button aria-label="Notifications" className="relative mr-2 ml-[10px] h-5 w-5">
          <Svg w={12} h={12}>
            <path d="M0.5 1 H11 V9 H6 L3.5 11.5 V9 H0.5 Z" fill="#111" stroke="none" />
            <path d="M2 3.5 H9 M2 5.5 H9" stroke="#aaa" />
          </Svg>
          <span className="absolute right-0 bottom-0 flex h-3 w-[14px] items-center justify-center rounded-full border border-[#888] bg-[#d2d2d2] text-[8px]">22</span>
        </button>
      </div>
    </div>
  );
}

export default function App() {
  return (
    <div className="flex h-screen flex-col bg-[#efefef] font-['Open_Sans',sans-serif] text-[#333]">
      <TitleBar />
      <TabRow />
      <Ribbon />
      <DocumentArea />
      <StatusBar />
      <Taskbar />
    </div>
  );
}
